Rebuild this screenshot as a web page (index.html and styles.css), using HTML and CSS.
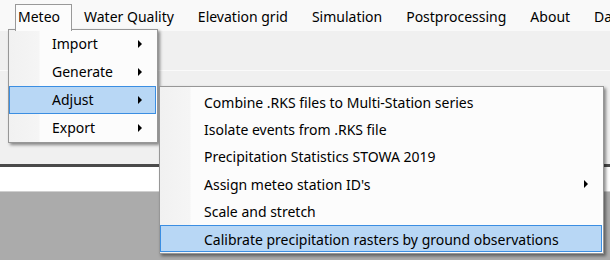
FILE: index.html
```html
<!DOCTYPE html>
<html>
<head>
<meta charset="utf-8">
<link rel="stylesheet" href="styles.css">
</head>
<body>
<div class="app">
  <div class="menubar">
    <div class="mitem open">Meteo</div>
    <div class="mitem">Water Quality</div>
    <div class="mitem">Elevation grid</div>
    <div class="mitem">Simulation</div>
    <div class="mitem">Postprocessing</div>
    <div class="mitem">About</div>
    <div class="mitem">Data</div>
  </div>
  <div class="toolstrip"></div>
  <div class="panel"></div>
  <div class="rule"></div>
  <div class="white"></div>
  <div class="workspace"></div>

  <div class="menu menu-main">
    <div class="row"><span class="label">Import</span><span class="arrow"></span></div>
    <div class="row"><span class="label">Generate</span><span class="arrow"></span></div>
    <div class="row hot"><span class="label">Adjust</span><span class="arrow"></span></div>
    <div class="row"><span class="label">Export</span><span class="arrow"></span></div>
  </div>

  <div class="menu menu-sub">
    <div class="row"><span class="label">Combine .RKS files to Multi-Station series</span></div>
    <div class="row"><span class="label">Isolate events from .RKS file</span></div>
    <div class="row"><span class="label">Precipitation Statistics STOWA 2019</span></div>
    <div class="row"><span class="label">Assign meteo station ID's</span><span class="arrow"></span></div>
    <div class="row"><span class="label">Scale and stretch</span></div>
    <div class="row hot"><span class="label">Calibrate precipitation rasters by ground observations</span></div>
  </div>
</div>
</body>
</html>
```

FILE: styles.css
```css
html, body {
  margin: 0;
  padding: 0;
}
body {
  width: 610px;
  height: 260px;
  overflow: hidden;
  font-family: "Noto Sans", "Open Sans", sans-serif;
  font-size: 14px;
  color: #000;
  background: #ababab;
}
.app {
  position: relative;
  width: 610px;
  height: 260px;
  display: flex;
  flex-direction: column;
  overflow: hidden;
}
.menubar {
  height: 31px;
  flex: none;
  background: #f9f9f9;
  display: flex;
  align-items: flex-start;
  padding-left: 15px;
  white-space: nowrap;
  box-sizing: border-box;
}
.mitem {
  margin-top: 4px;
  height: 26px;
  line-height: 24px;
  padding: 0 11px;
  box-sizing: border-box;
  border: 1px solid transparent;
  border-bottom: none;
}
.mitem.open {
  padding: 0 11px 0 2px;
  border-color: #999;
  background: #fcfcfc;
  position: relative;
  z-index: 3;
  height: 27px;
}
.toolstrip {
  height: 39px;
  flex: none;
  background: #f0f0f0;
}
.panel {
  height: 87px;
  flex: none;
  background: #f0f0f0;
  border-top: 1px solid #fafafa;
  box-sizing: border-box;
}
.rule {
  flex: none;
  background: #f0f0f0;
  border-bottom: 3px solid #4a4a4a;
  box-sizing: content-box;
  height: 7px;
}
.white {
  height: 24px;
  flex: none;
  background: #fff;
  border-bottom: 1px solid #cfcfcf;
}
.workspace {
  flex: 1;
  background: #ababab;
}

.menu {
  position: absolute;
  box-sizing: border-box;
  border: 1px solid #979797;
  background: linear-gradient(to right, #f1f1f1 0, #f5f5f5 30px, #fcfcfc 31px);
  box-shadow: 2px 2px 3px rgba(0, 0, 0, 0.45);
  z-index: 2;
}
.menu-main {
  left: 8px;
  top: 29px;
  width: 150px;
  height: 114px;
}
.menu-sub {
  left: 159px;
  top: 86px;
  width: 445px;
  height: 168px;
  padding-top: 1px;
}
.row {
  height: 28px;
  box-sizing: border-box;
  display: flex;
  align-items: center;
  padding-left: 42px;
  padding-right: 13px;
  border: 1px solid transparent;
  margin-right: 1px;
  white-space: nowrap;
}
.menu-sub .row {
  height: 27.4px;
  padding-left: 43px;
}
.menu-sub .label {
  padding-bottom: 0;
  padding-top: 1px;
}
.row.hot {
  background: #b8d7f5;
  border-color: #3b8ee2;
}
.label {
  flex: 1;
  padding-bottom: 1px;
}
.arrow {
  width: 0;
  height: 0;
  border-top: 4px solid transparent;
  border-bottom: 4px solid transparent;
  border-left: 4px solid #000;
}
```
